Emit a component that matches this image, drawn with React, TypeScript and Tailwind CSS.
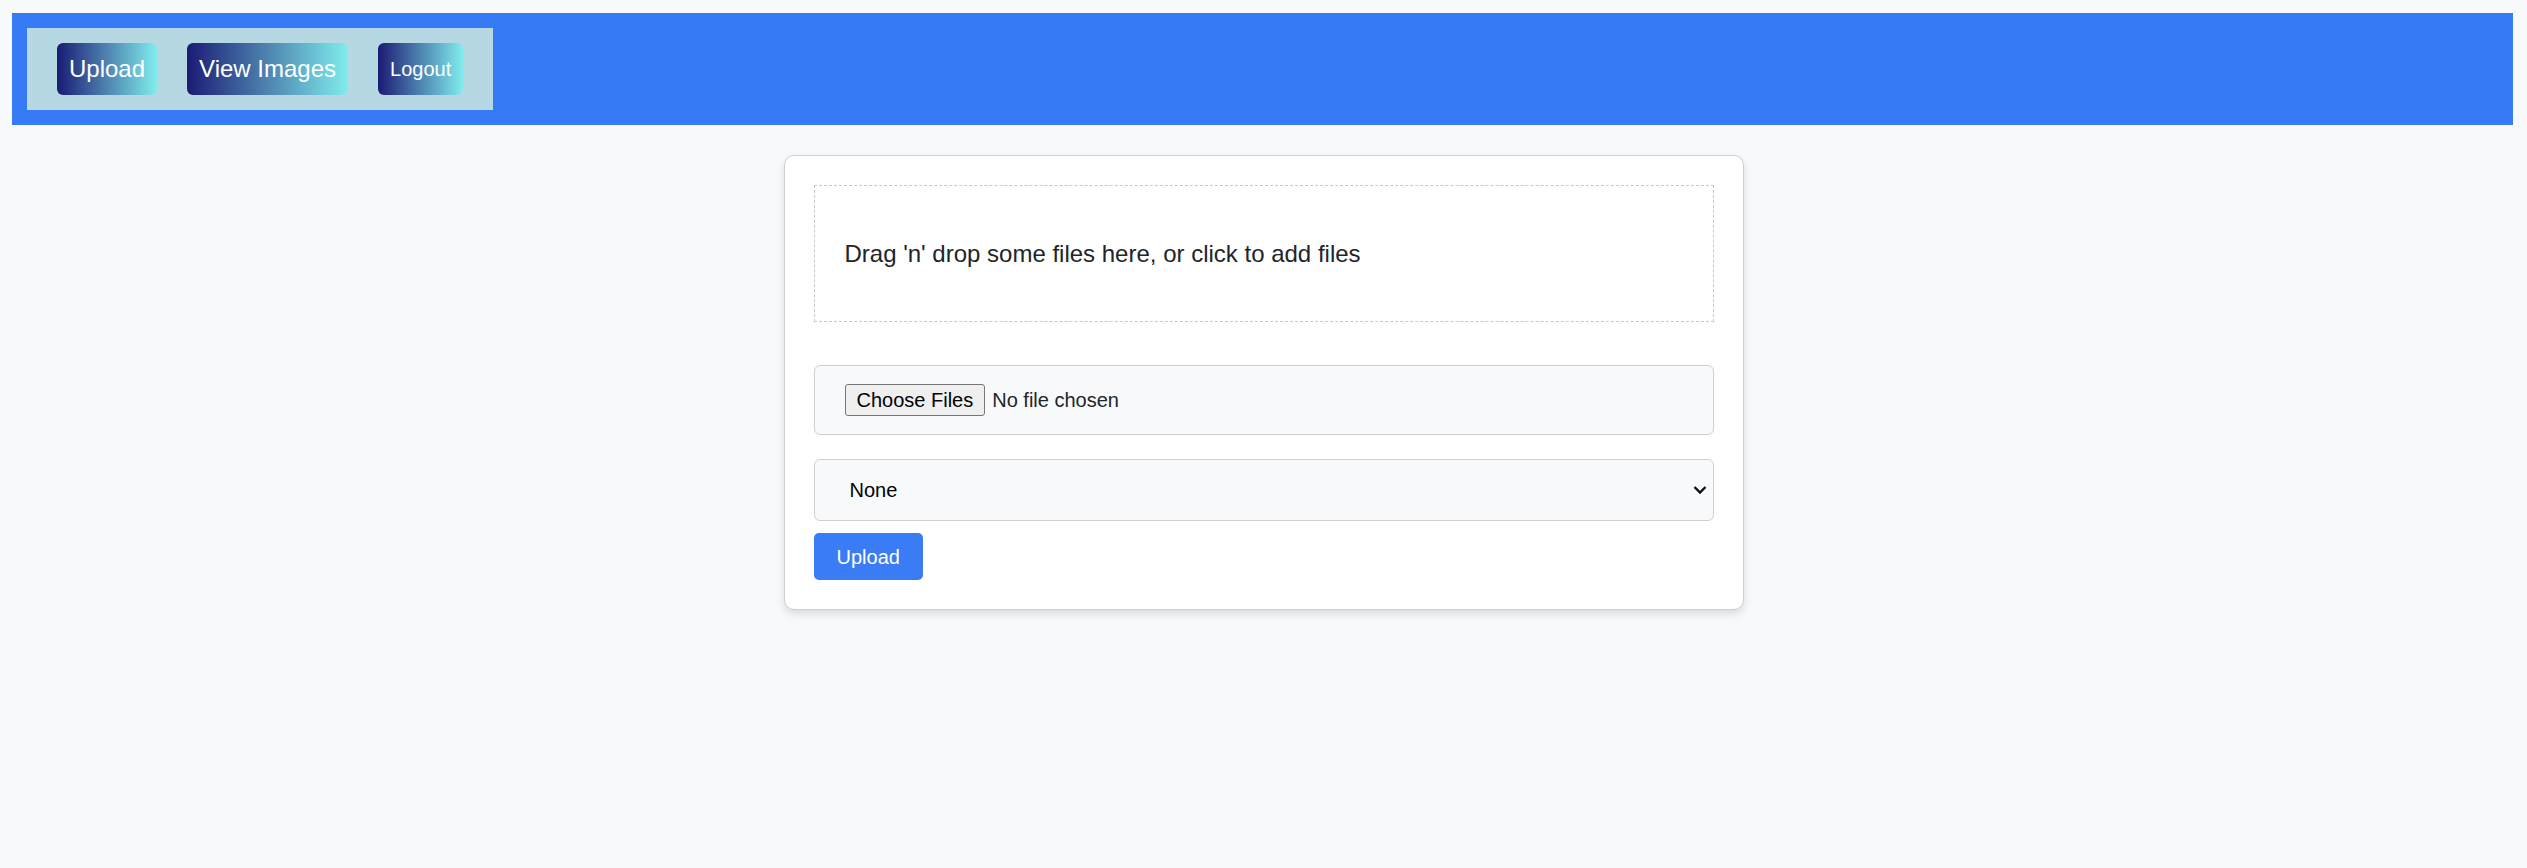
import { useState } from 'react';

const NAV_LINKS = [
  { label: 'Upload', size: 'text-[24px]' },
  { label: 'View Images', size: 'text-[24px]' },
  { label: 'Logout', size: 'text-[20px]' },
];

export default function App() {
  const [category, setCategory] = useState('none');

  return (
    <div className="min-h-screen bg-[#f8f9fa] pt-[13px] font-['Liberation_Sans',Arial,sans-serif]">
      {/* Top nav */}
      <nav className="ml-[12px] mr-[14px] bg-[#377af6] p-[15px]">
        <div className="inline-flex items-center gap-[30px] bg-[#b5d8e3] px-[30px] py-[15px]">
          {NAV_LINKS.map((link) => (
            <button
              key={link.label}
              className={`h-[52px] px-[12px] rounded-[6px] bg-[linear-gradient(to_right,#1b1b74,#80eded)] text-white ${link.size}`}
            >
              {link.label}
            </button>
          ))}
        </div>
      </nav>

      {/* Upload card */}
      <div className="mx-auto mt-[30px] w-[960px] rounded-[10px] border border-[#cfcfcf] bg-white p-[29px] shadow-[0_4px_8px_rgba(0,0,0,0.12)]">
        <div className="flex h-[137px] items-center border border-dashed border-[#c8c8c8] px-[30px] text-[24px] text-[#212529]">
          Drag 'n' drop some files here, or click to add files
        </div>

        <div className="mt-[43px] flex h-[70px] items-center rounded-[6px] border border-[#cfcfcf] bg-[#f8f9fa] pl-[30px]">
          <button className="h-[32px] rounded-[3px] border border-[#767676] bg-[#efefef] px-[11px] text-[20px] text-black">
            Choose Files
          </button>
          <span className="ml-[7px] text-[20px] text-[#212529]">No file chosen</span>
        </div>

        <div className="relative mt-[24px]">
          <select
            value={category}
            onChange={(e) => setCategory(e.target.value)}
            className="h-[62px] w-full appearance-none rounded-[6px] border border-[#cfcfcf] bg-[#f8f9fa] pl-[35px] text-[20px] text-black outline-none"
          >
            <option value="none">None</option>
          </select>
          <svg
            className="pointer-events-none absolute right-[7px] top-1/2 -translate-y-1/2"
            width="14"
            height="9"
            viewBox="0 0 14 9"
            fill="none"
          >
            <path d="M1.5 1.5 L7 7 L12.5 1.5" stroke="#111" strokeWidth="2.4" />
          </svg>
        </div>

        <button className="mt-[12px] h-[47px] rounded-[5px] bg-[#3a7cf5] px-[23px] text-[20px] text-white">
          Upload
        </button>
      </div>
    </div>
  );
}
